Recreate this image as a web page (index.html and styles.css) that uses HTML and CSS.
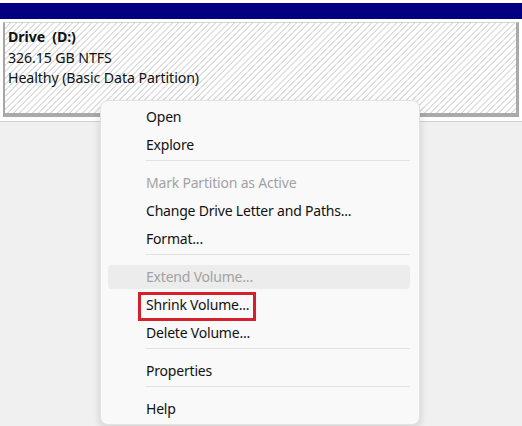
FILE: index.html
```html
<!DOCTYPE html>
<html lang="en">
<head>
  <meta charset="UTF-8" />
  <meta name="viewport" content="width=device-width, initial-scale=1.0"/>
  <title>Disk Management</title>
  <link rel="stylesheet" href="styles.css">
</head>
<body>
  <div class="strip"></div>
  <div class="titlebar"></div>

  <div class="disk">
    <div class="partition">
      <div class="name">Drive &nbsp;(D:)</div>
      <div>326.15 GB NTFS</div>
      <div>Healthy (Basic Data Partition)</div>
    </div>
  </div>

  <div class="workspace"></div>

  <!-- context menu -->
  <div class="menu">
    <div class="item">Open</div>
    <div class="item">Explore</div>
    <div class="sep"></div>
    <div class="item disabled">Mark Partition as Active</div>
    <div class="item">Change Drive Letter and Paths...</div>
    <div class="item">Format...</div>
    <div class="sep"></div>
    <div class="item disabled hover">Extend Volume...</div>
    <div class="item"><span class="marked">Shrink Volume...</span></div>
    <div class="item">Delete Volume...</div>
    <div class="sep"></div>
    <div class="item">Properties</div>
    <div class="sep"></div>
    <div class="item">Help</div>
  </div>
</body>
</html>
```

FILE: styles.css
```css
html, body {
  height: 100%;
}

body {
  margin: 0;
  font-family: 'Noto Sans', 'Segoe UI', sans-serif;
  color: #111;
  background: #fff;
  display: flex;
  flex-direction: column;
  overflow: hidden;
}

.strip {
  height: 3px;
}

.titlebar {
  height: 16px;
  background: #000080;
}

.disk {
  padding: 3px 3px 4px 3px;
}

.partition {
  height: 86px;
  padding: 4px 0 0 3px;
  border-top: 1px solid #d4d4d4;
  border-left: 2px solid #a6a6a6;
  border-right: 3px solid #aaa;
  border-bottom: 4px solid #aaa;
  background: repeating-linear-gradient(135deg, #fff 0 3px, #e0e0e0 3px 4.4px);
  font-size: 14.2px;
  line-height: 20.5px;
  letter-spacing: -0.1px;
}

.partition .name {
  font-weight: bold;
}

.workspace {
  flex: 1;
  border-top: 1px solid #d2d2d2;
  background: #f0f0f0;
}

.menu {
  position: absolute;
  left: 100px;
  top: 100px;
  width: 318px;
  padding-top: 3px;
  display: flex;
  flex-direction: column;
  background: #f9f9f9;
  border: 1px solid #e3e3e3;
  border-radius: 8px;
  box-shadow: 0 3px 8px rgba(0, 0, 0, 0.14);
  font-size: 14px;
  letter-spacing: -0.2px;
}

.item {
  height: 24px;
  line-height: 24px;
  margin: 1px 9px 3px 7px;
  padding-left: 38px;
  border-radius: 4px;
}

.item.disabled {
  color: #a2a2a2;
}

.item.hover {
  background: #ececec;
}

.sep {
  height: 1px;
  margin: 0 9px 9px 45px;
  background: #e2e2e2;
}

.marked {
  position: relative;
  display: inline-block;
}

.marked::after {
  content: "";
  position: absolute;
  left: -8px;
  right: -7px;
  top: -1px;
  bottom: -4px;
  border: 3px solid #d3202b;
}
```
